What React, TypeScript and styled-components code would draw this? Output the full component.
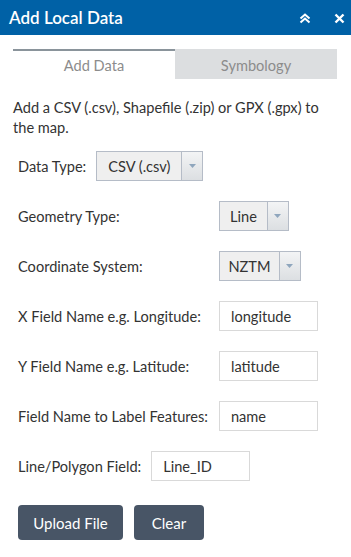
import styled, { createGlobalStyle } from "styled-components";

const GlobalStyle = createGlobalStyle`
  body {
    margin: 0;
    background: #ffffff;
    font-family: Lato, "Open Sans", sans-serif;
    color: #333333;
  }
`;

const ArrowIcon = () => (
  <svg width="7" height="4" viewBox="0 0 7 4">
    <path d="M0 0 L7 0 L3.5 4 Z" fill="#8fa6bd" />
  </svg>
);

const Select = ({ value, width }: { value: string; width: number }) => (
  <SelectBox $width={width}>
    <SelectValue>{value}</SelectValue>
    <SelectArrow>
      <ArrowIcon />
    </SelectArrow>
  </SelectBox>
);

const fields = [
  { label: "Geometry Type:", select: "Line", width: 70 },
  { label: "Coordinate System:", select: "NZTM", width: 82 },
  { label: "X Field Name e.g. Longitude:", input: "longitude" },
  { label: "Y Field Name e.g. Latitude:", input: "latitude" },
  { label: "Field Name to Label Features:", input: "name" },
];

export default function App() {
  return (
    <>
      <GlobalStyle />
      <Panel>
        <Header>
          <Title>Add Local Data</Title>
          <HeaderIcons>
            <svg width="12" height="11" viewBox="0 0 12 11">
              <path
                d="M1.5 5.5 L6 1.5 L10.5 5.5 M1.5 9.5 L6 5.5 L10.5 9.5"
                stroke="#fff"
                strokeWidth="2"
                fill="none"
              />
            </svg>
            <svg width="11" height="11" viewBox="0 0 11 11">
              <path
                d="M1.5 1.5 L9.5 9.5 M9.5 1.5 L1.5 9.5"
                stroke="#fff"
                strokeWidth="2.4"
                fill="none"
              />
            </svg>
          </HeaderIcons>
        </Header>
        <Body>
          <Tabs>
            <Tab $active>Add Data</Tab>
            <Tab>Symbology</Tab>
          </Tabs>
          <Description>
            Add a CSV (.csv), Shapefile (.zip) or GPX (.gpx) to the map.
          </Description>
          <Form>
            <Row>
              <Label>Data Type:</Label>
              <Select value="CSV (.csv)" width={107} />
            </Row>
            <FieldGrid>
              {fields.map((f) => (
                <>
                  <Label key={f.label}>{f.label}</Label>
                  <Cell>
                    {f.select ? (
                      <Select value={f.select} width={f.width!} />
                    ) : (
                      <TextInput>{f.input}</TextInput>
                    )}
                  </Cell>
                </>
              ))}
            </FieldGrid>
            <Row>
              <Label>Line/Polygon Field:</Label>
              <TextInput>Line_ID</TextInput>
            </Row>
          </Form>
          <Buttons>
            <Button $width={105}>Upload File</Button>
            <Button $width={70}>Clear</Button>
          </Buttons>
        </Body>
      </Panel>
    </>
  );
}

const Panel = styled.div`
  width: 351px;
  height: 557px;
  display: flex;
  flex-direction: column;
`;

const Header = styled.div`
  height: 35px;
  background: #0061a6;
  display: flex;
  align-items: center;
  justify-content: space-between;
  padding: 0 6px 0 9px;
`;

const Title = styled.div`
  color: #fff;
  font-size: 17px;
  font-weight: 600;
`;

const HeaderIcons = styled.div`
  display: flex;
  align-items: center;
  gap: 23px;
  margin-top: 1px;
`;

const Body = styled.div`
  padding: 14px 14px 0 13px;
`;

const Tabs = styled.div`
  display: grid;
  grid-template-columns: 162px 162px;
`;

const Tab = styled.div<{ $active?: boolean }>`
  height: 28px;
  display: flex;
  align-items: center;
  justify-content: center;
  font-size: 14.6px;
  color: #8c8c8c;
  border-top: 2px solid ${(p) => (p.$active ? "#8a949b" : "#dcdee0")};
  background: ${(p) => (p.$active ? "#fff" : "#dcdee0")};
`;

const Description = styled.p`
  margin: 19px 0 0;
  font-size: 14.6px;
  line-height: 20px;
  color: #333;
  padding-right: 14px;
`;

const Form = styled.div`
  padding-left: 5px;
  margin-top: 13px;
  display: flex;
  flex-direction: column;
  gap: 20px;
`;

const Row = styled.div`
  display: flex;
  align-items: center;
  gap: 10px;
`;

const FieldGrid = styled.div`
  display: grid;
  grid-template-columns: auto 1fr;
  column-gap: 11px;
  row-gap: 20px;
  align-items: center;
`;

const Cell = styled.div`
  display: flex;
`;

const Label = styled.div`
  font-size: 14.6px;
  color: #333;
  white-space: nowrap;
`;

const SelectBox = styled.div<{ $width: number }>`
  width: ${(p) => p.$width}px;
  height: 30px;
  box-sizing: border-box;
  border: 1px solid #b5bcc7;
  background: #efefef;
  display: flex;
`;

const SelectValue = styled.div`
  flex: 1;
  display: flex;
  align-items: center;
  justify-content: center;
  font-size: 14.6px;
  color: #333;
`;

const SelectArrow = styled.div`
  width: 20px;
  border-left: 1px solid #b5bcc7;
  background: linear-gradient(#f3f4f5, #dcdfe2);
  display: flex;
  align-items: center;
  justify-content: center;
`;

const TextInput = styled.div`
  width: 99px;
  height: 30px;
  box-sizing: border-box;
  border: 1px solid #d9d9d9;
  padding-left: 11px;
  display: flex;
  align-items: center;
  font-size: 14.6px;
  color: #333;
`;

const Buttons = styled.div`
  display: flex;
  gap: 11px;
  padding-left: 5px;
  margin-top: 24px;
`;

const Button = styled.button<{ $width: number }>`
  width: ${(p) => p.$width}px;
  height: 35px;
  border: none;
  border-radius: 4px;
  background: #485566;
  color: #fff;
  font-family: Lato, "Open Sans", sans-serif;
  font-size: 15px;
  padding: 0;
`;
